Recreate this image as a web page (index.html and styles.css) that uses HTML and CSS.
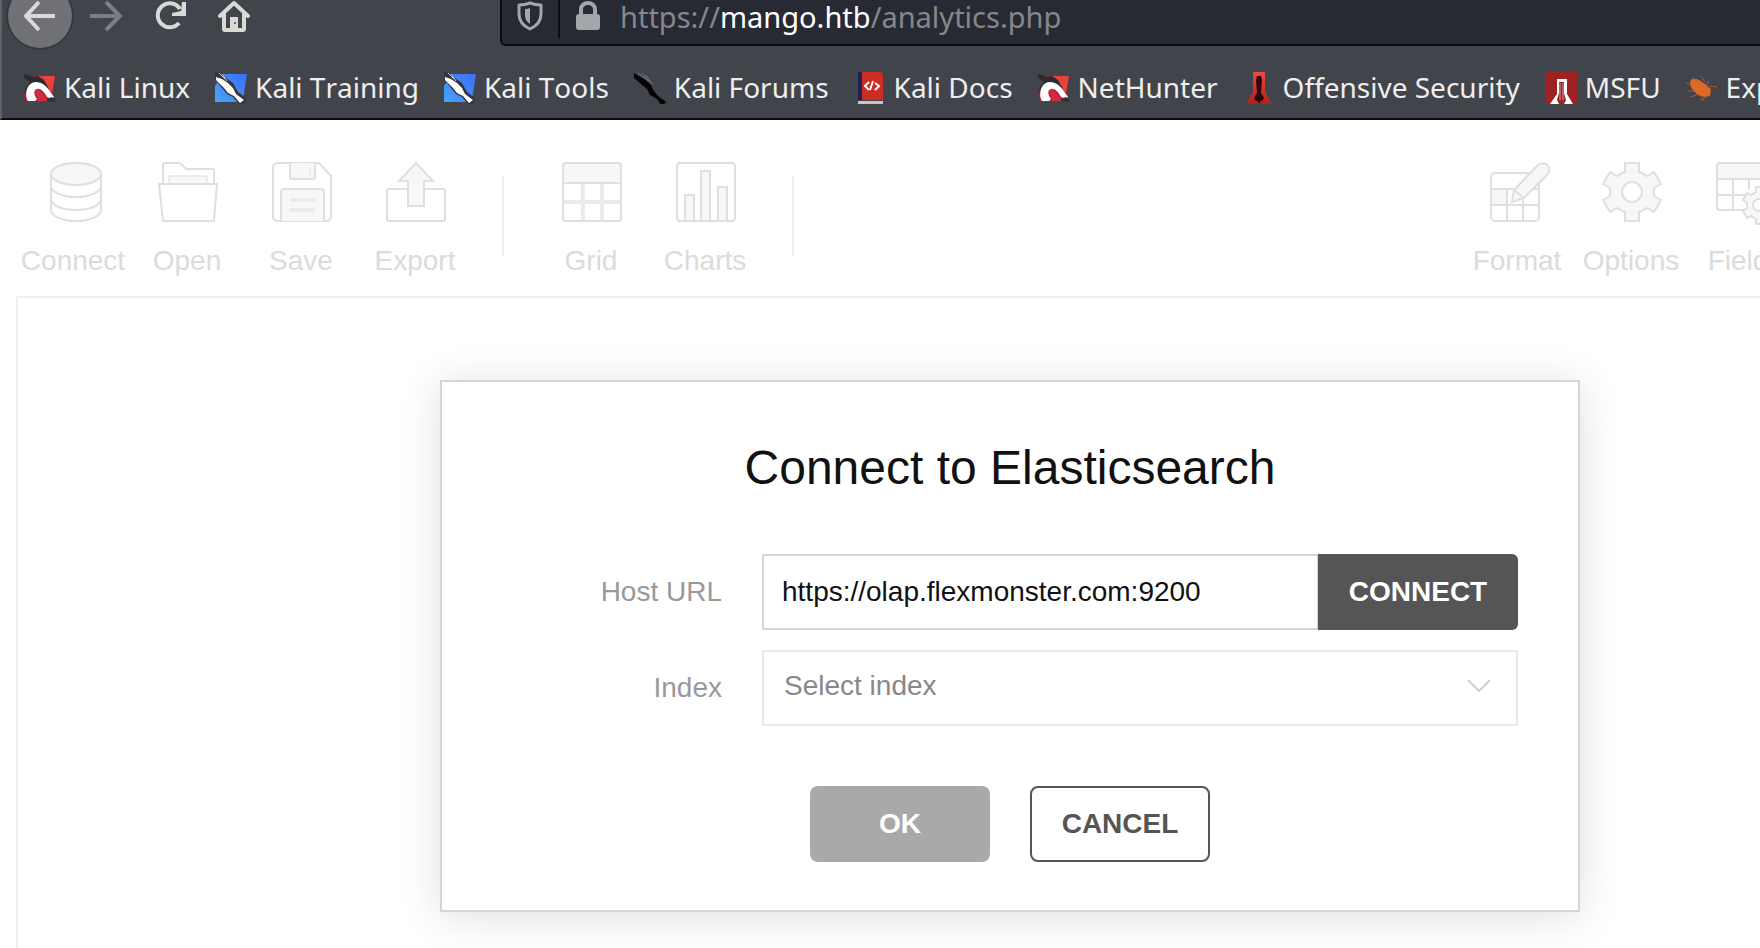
FILE: index.html
```html
<!DOCTYPE html>
<html lang="en">
<head>
<meta charset="utf-8">
<title>Analytics</title>
<link rel="stylesheet" href="styles.css">
</head>
<body>
<svg class="defs" aria-hidden="true">
  <linearGradient id="blue" x1="1" y1="0" x2="0" y2="1"><stop offset="0" stop-color="#3b6cf6"/><stop offset="1" stop-color="#47a5f8"/></linearGradient>
  <linearGradient id="red" x1="0" y1="0" x2="0" y2="1"><stop offset="0" stop-color="#ee4a43"/><stop offset="1" stop-color="#b11f1c"/></linearGradient>
  <symbol id="dragon-red" viewBox="0 0 32 32">
    <path d="M10 4H31L28 26 22 30H2L0 23z" fill="#b5173a"/>
    <path d="M11 4H31L28 21 24 17 17 9z" fill="#e8423c"/>
    <path d="M13 15l8 9 4 5H14l-3-9z" fill="#d22a40"/>
    <path d="M0 2l5 1 4 2 5-1 6 4 5 9-8-4-8-1-5 5-3 5 1-7 4-5-6-4z" fill="#2a2c30"/>
    <path d="M4 29C0 22 3 10 12 10c6 0 10 4 13 8l5 7-2 2-5-2c-3-5-6-9-10-8-4 1-3 6 0 10l-2 2z" fill="#fff"/>
    <path d="M23 27l5-2 4 3-3 2-6-1z" fill="#303238"/>
  </symbol>
  <symbol id="dragon-blue" viewBox="0 0 32 32">
    <path d="M8 2H32L28 28 24 30H0V14z" fill="url(#blue)"/>
    <path d="M0 0l6 1 5 5 7 5 5 9 8 6-1 5-6 1-6-7-6-3-5-6-7-9z" fill="#33363e"/>
    <path d="M1 5l6 2 6 4 5 5 3 6 8 6-4 3-6-7-6-3-4-5-8-8z" fill="#fff"/>
    <path d="M4 1l6 6M7 2l5 7" stroke="#c9c9c9" stroke-width="1"/>
  </symbol>
  <symbol id="dragon-black" viewBox="0 0 32 32">
    <path d="M0 1l5 3 7 4 5 5 3 6 4 5 7 5 1 2-5 2-4-6-7-4-3-6-6-5-7-6z" fill="#050505"/>
    <path d="M4 1l10 8M8 1l8 9M12 3l6 9" stroke="#75777b" stroke-width="1"/>
  </symbol>
  <symbol id="book" viewBox="0 0 32 32">
    <path d="M4 0h4v28H4z" fill="#1e2352"/>
    <path d="M8 0h19l2 2v26H8z" fill="#cb2d25"/>
    <path d="M4 29h25v3H4z" fill="#cfc4c1"/>
    <path d="M15 10l-4 4 4 4M21 11l4 3-4 4M19 9l-3 9" fill="none" stroke="#fff" stroke-width="2"/>
  </symbol>
  <symbol id="tower-red" viewBox="0 0 32 32">
    <path d="M10 0h12v20l7 12H3l7-12z" fill="url(#red)"/>
    <path d="M14 4h4l1 4-1 13 3 5-2 3h-2v2h-2v-2h-2l-2-3 3-5-1-13z" fill="#2c0606"/>
  </symbol>
  <symbol id="tower-white" viewBox="0 0 32 32">
    <path d="M0 0h32v32H0z" fill="#9c2224"/>
    <path d="M12 7h10v15l6 10H5l7-10z" fill="#fff"/>
    <path d="M14 10h5v11l2 7-2 4h-5l-2-4 2-7z" fill="#9c2224"/>
    <path d="M15 11v17M18 11v17" stroke="#d9a0a0" stroke-width="1"/>
  </symbol>
  <symbol id="bug" viewBox="0 0 32 32">
    <path d="M5 8c4-3 9 0 14 4l6 5-1 7c-7 2-12 0-16-5-4-4-5-8-3-11z" fill="#dc6a25"/>
    <path d="M0 11l6 2M6 5l5 4M2 19l7 0M4 25l9-3M14 28l6-3M15 4l4 6M24 14l7 1M23 9l-3 4M18 28l-2 0" fill="none" stroke="#a95c35" stroke-width="1"/>
  </symbol>
</svg>

<header class="browser">
  <nav class="nav" aria-label="Navigation">
    <div class="nav-buttons">
      <button class="nav-btn back" aria-label="Back"><svg width="32" height="32" viewBox="0 0 32 32"><path d="M31 16H2M15 2L2 16l13 14" fill="none" stroke="#d9d9d6" stroke-width="4"/></svg></button>
      <button class="nav-btn" aria-label="Forward"><svg width="32" height="32" viewBox="0 0 32 32"><path d="M0 16h30M16 2l14 14-14 14" fill="none" stroke="#7c7e82" stroke-width="4"/></svg></button>
      <button class="nav-btn" aria-label="Reload"><svg width="32" height="32" viewBox="0 0 32 32"><path d="M25 23A12 12 0 1 1 26 9" fill="none" stroke="#d9d9d6" stroke-width="4"/><path d="M32 2v14H18v-3l9-2 1-9z" fill="#d9d9d6"/></svg></button>
      <button class="nav-btn" aria-label="Home"><svg width="32" height="32" viewBox="0 0 32 32"><path d="M2 16L16 3l14 13M6 14v15q0 1 1 1h18q1 0 1-1V14" fill="none" stroke="#d9d9d6" stroke-width="4" stroke-linejoin="round" stroke-linecap="round"/><path d="M12 17h8v13h-8z" fill="#d9d9d6"/><circle cx="17" cy="23" r="1" fill="#42444b"/></svg></button>
    </div>
    <div class="address">
      <span class="shield"><svg width="26" height="32" viewBox="0 0 26 32"><path d="M2 5q6 0 11-2 5 2 11 2v9q0 10-11 15Q2 24 2 14z" fill="none" stroke="#a5a6aa" stroke-width="3" stroke-linejoin="round"/><path d="M13 8v16q-5-3-5-9V9q3 0 5-1z" fill="#a5a6aa"/></svg></span>
      <span class="lock"><svg width="26" height="32" viewBox="0 0 26 32"><path d="M6 15V9a7 6 0 0 1 14 0v6" fill="none" stroke="#a5a6aa" stroke-width="4"/><rect x="1" y="14" width="24" height="16" rx="3" fill="#a5a6aa"/></svg></span>
      <span class="url">https://<b>mango.htb</b>/analytics.php</span>
    </div>
  </nav>
  <nav class="bookmarks" aria-label="Bookmarks">
    <a href="#"><svg><use href="#dragon-red"/></svg>Kali Linux</a>
    <a href="#"><svg><use href="#dragon-blue"/></svg>Kali Training</a>
    <a href="#"><svg><use href="#dragon-blue"/></svg>Kali Tools</a>
    <a href="#"><svg><use href="#dragon-black"/></svg>Kali Forums</a>
    <a href="#"><svg><use href="#book"/></svg>Kali Docs</a>
    <a href="#"><svg><use href="#dragon-red"/></svg>NetHunter</a>
    <a href="#"><svg><use href="#tower-red"/></svg>Offensive Security</a>
    <a href="#"><svg><use href="#tower-white"/></svg>MSFU</a>
    <a href="#"><svg><use href="#bug"/></svg>Exploit-DB</a>
  </nav>
</header>

<main class="app">
  <div class="toolbar">
    <button class="tool"><svg viewBox="-1 0 60 60"><path d="M6 12v36c0 6 11 11 25 11s25-5 25-11V12"/><path d="M6 24c0 6 11 11 25 11s25-5 25-11M6 37c0 6 11 11 25 11s25-5 25-11"/><ellipse class="fill" cx="31" cy="12" rx="25" ry="11"/></svg>Connect</button>
    <button class="tool"><svg viewBox="0 0 60 60"><path d="M5 22V3q0-2 2-2h14q2 0 3 2l4 4h26q2 0 2 2v13"/><path class="fill soft" d="M11 22v-6q0-2 2-2h34q2 0 2 2v6"/><path class="white" d="M1 22h58l-3 37H5z"/></svg>Open</button>
    <button class="tool"><svg viewBox="0 0 60 60"><path d="M6 1h41l12 13v40q0 5-5 5H6q-5 0-5-5V6q0-5 5-5z"/><path class="fill" d="M18 1v14q0 2 2 2h21q2 0 2-2V1"/><path class="soft" d="M38 5v8"/><path class="fill" d="M9 59V30q0-3 3-3h37q3 0 3 3v29"/><path class="soft wide" d="M18 38h25M18 48h25"/></svg>Save</button>
    <button class="tool"><svg viewBox="0 0 60 60"><path d="M22 27H3q-2 0-2 2v28q0 2 2 2h54q2 0 2-2V29q0-2-2-2H38"/><path class="fill" d="M30 1L13 19h9v25h16V19h9z"/></svg>Export</button>
    <span class="divider"></span>
    <button class="tool"><svg viewBox="0 0 60 60"><path class="fill none" d="M1 1h58v20H1z"/><path class="soft wide" d="M21 21v38M40 21v38M1 40h58"/><path d="M1 21h58"/><rect x="1" y="1" width="58" height="58" rx="3"/></svg>Grid</button>
    <button class="tool"><svg viewBox="0 0 60 60"><path class="fill" d="M9 59V33h9v26M25 59V9h9v50M42 59V25h9v34"/><rect x="1" y="1" width="58" height="58" rx="3"/></svg>Charts</button>
    <span class="divider"></span>
    <div class="tools-right">
      <button class="tool"><svg viewBox="-2 0 60 60"><path class="fill none" d="M1 27h16v17H1z"/><rect x="1" y="11" width="48" height="48" rx="4"/><path d="M1 27h48M1 43h48M17 27v32M33 36v23"/><path class="fill" d="M24 28L47 4q4-4 9-2 6 5 1 11L34 36l-12 4z"/><path d="M24 28l10 8"/></svg>Format</button>
      <button class="tool"><svg viewBox="0 0 60 60"><path class="fill" d="M23 1h14v9q4 1 8 4l7-4 7 12-7 4v8l7 4-7 12-7-4q-4 3-8 4v9H23v-9q-4-1-8-4l-7 4-7-12 7-4v-8l-7-4 7-12 7 4q4-3 8-4z"/><circle class="white" cx="30" cy="30" r="10"/></svg>Options</button>
      <button class="tool"><svg viewBox="0 0 60 60"><path class="fill none" d="M1 1h58v16H1z"/><path d="M1 17h58M1 33h30M17 17v31M33 17v10M30 48H4q-3 0-3-3V4q0-3 3-3h52q3 0 3 3v18"/><path class="fill" d="M40 25h8v5l5 3 4-2 4 7-4 3v5l4 3-4 7-4-2-5 3v5h-8v-5l-5-3-4 2-4-7 4-3v-5l-4-3 4-7 4 2 5-3z"/><circle class="white" cx="43" cy="43" r="6"/></svg>Fields</button>
    </div>
  </div>

  <section class="pivot">
    <form class="dialog" aria-labelledby="dialog-title">
      <h1 id="dialog-title">Connect to Elasticsearch</h1>
      <div class="row">
        <label for="host">Host URL</label>
        <div class="field">
          <input id="host" type="text" value="https://olap.flexmonster.com:9200">
          <button type="button" class="btn connect">CONNECT</button>
        </div>
      </div>
      <div class="row">
        <label for="index">Index</label>
        <div class="field select">
          <select id="index"><option>Select index</option></select>
          <svg class="chevron" width="24" height="16" viewBox="0 0 24 16"><path d="M1 2l11 11L23 2" fill="none" stroke="#cfcfcf" stroke-width="2"/></svg>
        </div>
      </div>
      <div class="actions">
        <button type="button" class="btn ok">OK</button>
        <button type="button" class="btn cancel">CANCEL</button>
      </div>
    </form>
  </section>
</main>
</body>
</html>
```
FILE: styles.css
```css
* { box-sizing: border-box; }

html { height: 100%; }

body {
  margin: 0;
  min-height: 100%;
  display: flex;
  flex-direction: column;
  overflow: hidden;
  background: #fff;
  font-family: "Liberation Sans", Arial, sans-serif;
  font-size: 28px;
}

button, input, select { font: inherit; }

.defs {
  position: absolute;
  width: 0;
  height: 0;
}

/* Browser chrome */
.browser {
  background: #42444b;
  border-left: 2px solid #606268;
  border-bottom: 2px solid #0c0c0d;
  font-family: "Noto Sans", sans-serif;
  font-kerning: none;
  color: #eeeeec;
}

.nav {
  display: flex;
  height: 52px;
  align-items: flex-start;
}

.nav-buttons {
  display: flex;
  align-items: center;
  width: 498px;
  height: 32px;
  padding-left: 6px;
}

.nav-btn {
  flex: none;
  display: grid;
  place-items: center;
  width: 64px;
  height: 64px;
  padding: 0;
  border: 0;
  background: none;
}

.nav-btn.back {
  margin-right: 2px;
  background: #707176;
  border-radius: 50%;
  box-shadow: 0 0 0 2px #36383d;
}

.address {
  flex: 1;
  display: flex;
  align-items: flex-start;
  height: 46px;
  background: #282a33;
  border: solid #0c0c0d;
  border-width: 0 0 2px 2px;
  border-bottom-left-radius: 6px;
}

.shield {
  width: 58px;
  height: 38px;
  padding-left: 15px;
  border-right: 2px solid #0c0c0d;
}

.lock {
  width: 60px;
  padding-left: 15px;
}

.shield svg, .lock svg { display: block; }

.url {
  font-size: 29px;
  line-height: 34px;
  color: #85878a;
}

.url b {
  font-weight: 400;
  color: #fff;
}

.bookmarks {
  display: flex;
  gap: 25px;
  height: 66px;
  padding: 20px 0 0 22px;
}

.bookmarks a {
  flex: none;
  display: flex;
  gap: 8px;
  align-items: flex-start;
  height: 32px;
  line-height: 30px;
  color: inherit;
  text-decoration: none;
  white-space: nowrap;
}

.bookmarks svg {
  width: 32px;
  height: 32px;
}

/* Report area, wider than the window */
.app {
  flex: 1;
  display: flex;
  flex-direction: column;
  margin-right: -260px;
  padding: 0 16px;
}

.toolbar {
  display: flex;
  height: 176px;
  padding-top: 42px;
}

.tool {
  flex: none;
  display: flex;
  flex-direction: column;
  align-items: center;
  gap: 23px;
  width: 114px;
  padding: 0;
  border: 0;
  background: none;
  color: #dbdbdb;
  line-height: 32px;
}

.tool svg {
  width: 60px;
  height: 60px;
  margin-left: 2px;
  overflow: visible;
  fill: none;
  stroke: #dfdfdf;
  stroke-width: 2;
}

.tool .fill { fill: #f7f7f7; }
.tool .white { fill: #fff; }
.tool .soft { stroke: #ebebeb; }
.tool .wide { stroke-width: 4; }
.tool .none { stroke: none; }

.divider {
  flex: none;
  width: 2px;
  height: 80px;
  margin: 14px 30px 0;
  background: #f0f0f0;
}

.tools-right {
  display: flex;
  margin-left: auto;
  padding-right: 202px;
}

.pivot {
  flex: 1;
  padding: 82px 0 34px;
  border: solid #f0f0f0;
  border-width: 2px 2px 0;
}

/* Connection dialog */
.dialog {
  width: 1140px;
  margin: 0 auto;
  padding: 58px 60px 48px;
  background: #fff;
  border: 2px solid #d5d5d5;
  box-shadow: 0 4px 40px rgba(0, 0, 0, 0.13);
}

.dialog h1 {
  margin: 0 0 58px;
  font-size: 48px;
  font-weight: 400;
  line-height: 56px;
  text-align: center;
  color: #111;
}

.row {
  display: flex;
  align-items: center;
  justify-content: flex-end;
  gap: 40px;
  margin-bottom: 20px;
}

.row label { color: #999; }

.field {
  display: flex;
  width: 756px;
  height: 76px;
}

.field input {
  flex: 1;
  min-width: 0;
  padding: 0 18px;
  border: 2px solid #d5d5d5;
  border-right-width: 1px;
  border-radius: 0;
  background: #fff;
  color: #111;
}

.btn {
  width: 180px;
  height: 76px;
  padding: 0;
  border: 0;
  border-radius: 8px;
  font-weight: 700;
  color: #fff;
}

.btn.connect {
  width: 200px;
  border-radius: 0 6px 6px 0;
  background: #555;
}

.select { position: relative; }

.select select {
  appearance: none;
  width: 100%;
  padding: 0 60px 6px 20px;
  border: 2px solid #e9e9e9;
  border-radius: 0;
  background: #fff;
  color: #888;
}

.chevron {
  position: absolute;
  top: 28px;
  right: 27px;
  pointer-events: none;
}

.actions {
  display: flex;
  justify-content: center;
  gap: 40px;
  margin-top: 60px;
}

.btn.ok { background: #a9a9a9; }

.btn.cancel {
  border: 2px solid #555;
  background: #fff;
  color: #555;
}
```
